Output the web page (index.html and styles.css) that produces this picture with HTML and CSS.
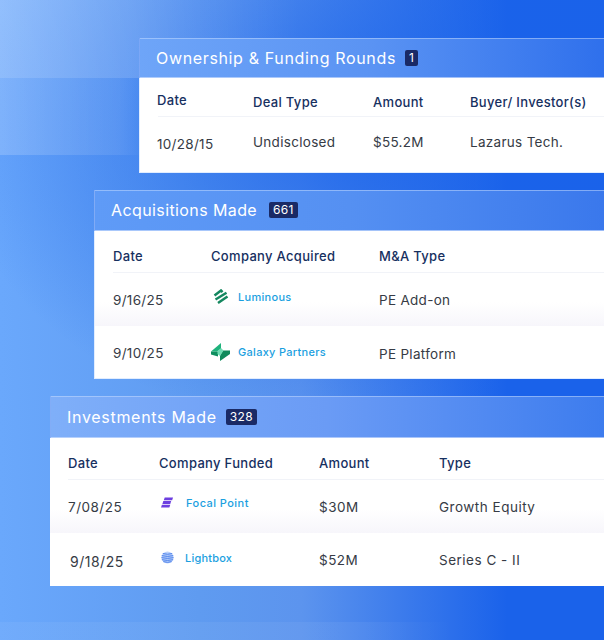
FILE: index.html
```html
<!DOCTYPE html>
<html lang="en">
<head>
<meta charset="utf-8">
<title>Company profile tables</title>
<link rel="stylesheet" href="styles.css">
</head>
<body>
<main class="stage">
  <section class="panel panel-ownership">
    <header class="panel-head"><h2>Ownership &amp; Funding Rounds</h2><span class="count">1</span></header>
    <div class="row row-head cols-ownership"><span class="nudge-up">Date</span><span>Deal Type</span><span>Amount</span><span>Buyer/ Investor(s)</span></div>
    <div class="row row-body row-last cols-ownership"><span class="nudge-down">10/28/15</span><span>Undisclosed</span><span>$55.2M</span><span>Lazarus Tech.</span></div>
  </section>

  <section class="panel panel-acquisitions">
    <header class="panel-head"><h2>Acquisitions Made</h2><span class="count">661</span></header>
    <div class="row row-head cols-acquisitions"><span>Date</span><span>Company Acquired</span><span>M&amp;A Type</span></div>
    <div class="row row-body row-fade cols-acquisitions"><span>9/16/25</span>
      <a class="company company-lum">
        <svg class="logo" viewBox="0 0 16 16"><g fill="none" stroke="#14875f" stroke-width="2.500"><path d="M1.500 6.500 8 1.500 9.500 3.200"/><path d="M2.500 10.500 13.500 3.800"/><path d="M5 14 14.500 7.500"/></g></svg>
        Luminous</a>
      <span>PE Add-on</span></div>
    <div class="row row-body cols-acquisitions"><span>9/10/25</span>
      <a class="company company-wide">
        <svg class="logo logo-lg" viewBox="0 0 19 18"><path fill="#1fb27c" d="M10 0V6L6 8.500H0Z"/><path fill="#0f8f5f" d="M0 8.500H7V13.500L0 11.500Z"/><path fill="#0f8a5b" d="M19 7.500V11L9 18V12.500L12 7.500Z"/><path fill="#6fdcb2" d="M10 5 12.500 7.500 9 13 6.500 11V8Z"/></svg>
        Galaxy Partners</a>
      <span class="drop">PE Platform</span></div>
  </section>

  <section class="panel panel-investments">
    <header class="panel-head"><h2>Investments Made</h2><span class="count">328</span></header>
    <div class="row row-head cols-investments"><span>Date</span><span>Company Funded</span><span>Amount</span><span>Type</span></div>
    <div class="row row-body row-fade cols-investments"><span>7/08/25</span>
      <a class="company company-focal">
        <svg class="logo" viewBox="0 0 14 13"><g fill="#6d3fe0"><path d="M4 1H13L12 4H3Z"/><path d="M2.500 5H11L10 8H1.500Z"/><path d="M1 9H10L9 12H0Z"/></g></svg>
        Focal Point</a>
      <span>$30M</span><span>Growth Equity</span></div>
    <div class="row row-body cols-investments"><span class="date-shift">9/18/25</span>
      <a class="company company-focal company-light">
        <svg class="logo" viewBox="0 0 14 14"><circle cx="7" cy="7" r="6.500" fill="#bcd2fb"/><g fill="none" stroke="#3f77e8" stroke-width="1"><path d="M2 2.800Q7 4.200 12 2.800"/><path d="M.8 5Q7 6.600 13.200 5"/><path d="M.5 7.200Q7 8.600 13.500 7.200"/><path d="M.9 9.400Q7 10.800 13.100 9.400"/><path d="M2.500 11.500Q7 12.800 11.500 11.500"/></g></svg>
        Lightbox</a>
      <span>$52M</span><span>Series C - II</span></div>
  </section>
</main>
</body>
</html>
```

FILE: styles.css
```css
* { box-sizing: border-box; }
html, body { margin: 0; padding: 0; height: 640px; overflow: hidden; }
body { font-family: Inter, "Noto Sans", "Liberation Sans", sans-serif; }

.stage {
  width: 604px;
  height: 640px;
  overflow: hidden;
  padding-top: 38px;
  display: flex;
  flex-direction: column;
  background-color: #1a63ea;
  background-image:
    linear-gradient(90deg, rgba(255,255,255,.28), rgba(255,255,255,.18) 130px, rgba(255,255,255,0) 300px),
    linear-gradient(90deg, rgba(255,255,255,.18), rgba(255,255,255,.08) 120px, rgba(255,255,255,0) 145px),
    linear-gradient(90deg, rgba(255,255,255,.05), rgba(255,255,255,.05) 60%, rgba(255,255,255,0) 75%),
    radial-gradient(ellipse 400px 300px at 350px 130px, rgba(26,99,234,.8), rgba(26,99,234,0)),
    linear-gradient(90deg, #6aa8fc 0%, #5f9bf0 33%, #5c94ee 50%, #3d7cec 66%, #1a62ea 84%, #1a62ea 100%);
  background-size: 100% 78px, 100% 77px, 100% 18px, 100% 100%, 100% 100%;
  background-position: 0 0, 0 78px, 0 622px, 0 0, 0 0;
  background-repeat: no-repeat;
}

.panel {
  margin-right: -2px;
  background: #fff;
  color: #363b45;
  border: 1px solid rgba(200,222,255,.55);
  border-top: 0;
}
.panel-ownership { margin-left: 139px; height: 135px; }
.panel-acquisitions { margin-left: 94px; margin-top: 17px; height: 189px; }
.panel-investments { margin-left: 50px; margin-top: 17px; height: 190px; border-width: 0; }

.panel-head {
  height: 41px;
  display: flex;
  align-items: center;
  gap: 9px;
  padding-left: 16px;
  margin-left: -1px;
  background: linear-gradient(90deg, #6ea5f8 0%, #5a93f3 50%, #2f70ec 100%);
  border: 1px solid rgba(200,222,255,.5);
  border-bottom-color: rgba(220,232,255,.6);
}
.panel-ownership .panel-head { height: 40px; }
.panel-acquisitions .panel-head { gap: 12px; padding-bottom: 1px; background: linear-gradient(90deg, #5f9bf7 0%, #5590f2 50%, #3a78ec 100%); }
.panel-investments .panel-head { height: 42px; margin-left: 0; background: linear-gradient(90deg, #7fafF9 0%, #6a9bf5 50%, #3d7cee 100%); }
.panel-head h2 {
  margin: 0;
  font-size: 16px;
  font-weight: 400;
  letter-spacing: .65px;
  line-height: 20px;
  color: #fff;
}
.panel-acquisitions .panel-head h2 { letter-spacing: .4px; }
.panel-investments .panel-head h2 { letter-spacing: .7px; }
.count {
  height: 16px;
  padding: 0 4px;
  border-radius: 2px;
  background: #1a2a66;
  color: #fff;
  font-size: 12px;
  line-height: 16px;
  letter-spacing: .3px;
}

.row {
  display: grid;
  align-items: center;
  padding-left: 17px;
}
.cols-ownership { grid-template-columns: 96px 120px 97px 1fr; }
.cols-acquisitions { grid-template-columns: 98px 168px 1fr; padding-left: 18px; }
.cols-investments { grid-template-columns: 91px 160px 120px 1fr; padding-left: 18px; letter-spacing: .45px; }

.row-head {
  height: 42px;
  padding-top: 8px;
  font-size: 13px;
  font-weight: 500;
  letter-spacing: .32px;
  color: #17305f;
  position: relative;
}
.row-head::after {
  content: "";
  position: absolute;
  left: 18px;
  right: 0;
  bottom: 0;
  border-bottom: 1px solid #f1f3f8;
}
.panel-ownership .row-head { height: 39px; }
.row-body {
  height: 53px;
  font-size: 13.500px;
  letter-spacing: .3px;
}
.row-last { height: 56px; padding-bottom: 6px; }
.row-fade { background: linear-gradient(180deg, #fff 55%, #f7f6fb 100%); }
.cols-investments.row-body { letter-spacing: .5px; }

.nudge-up { margin-top: -4px; }
.nudge-down { margin-top: 3px; }
.drop { margin-top: 2px; }
.date-shift { margin-left: 2px; font-size: 14px; margin-top: 4px; }

.company {
  display: flex;
  align-items: center;
  gap: 9px;
  font-size: 11px;
  font-weight: 500;
  letter-spacing: .3px;
  color: #1b9fdf;
  padding-left: 2px;
  margin-top: -5px;
}
.company-lum { margin-top: -6px; }
.company-wide { gap: 8px; padding-left: 0; margin-top: -2px; }
.company-focal { gap: 12px; letter-spacing: .45px; margin-top: -8px; }
.company-light { gap: 11px; letter-spacing: .2px; margin-top: -4px; }
.logo { width: 16px; height: 16px; flex: none; }
.logo-lg { width: 19px; height: 18px; }
.cols-investments .logo { width: 13px; height: 13px; }
```
